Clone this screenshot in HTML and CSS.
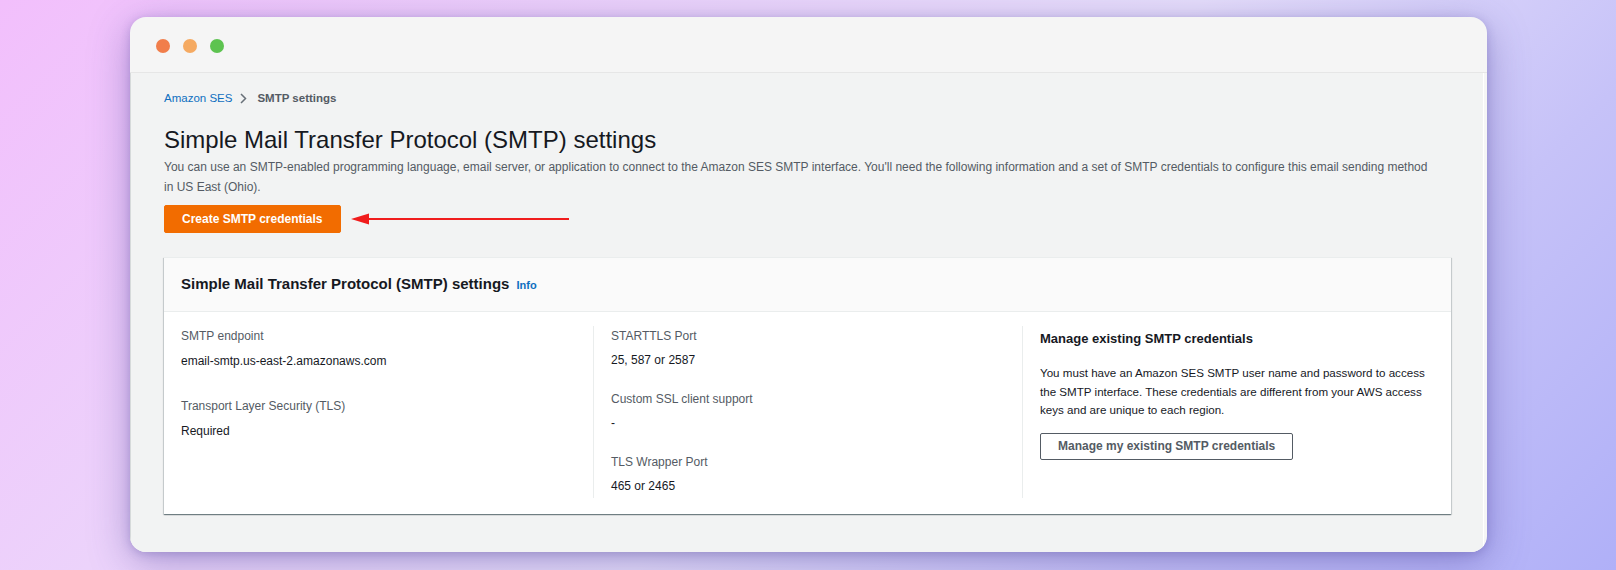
FILE: index.html
```html
<!DOCTYPE html>
<html lang="en">
<head>
<meta charset="utf-8">
<title>SMTP settings</title>
<link rel="stylesheet" href="styles.css">
</head>
<body>
<div class="stage">
  <div class="window">
    <div class="titlebar">
      <span class="dot dot-red"></span>
      <span class="dot dot-yellow"></span>
      <span class="dot dot-green"></span>
    </div>
    <div class="content">
      <nav class="breadcrumb">
        <a class="crumb-link" href="#">Amazon SES</a>
        <svg class="crumb-sep" width="7" height="11" viewBox="0 0 7 11"><path d="M1 1l4.5 4.5L1 10" fill="none" stroke="#687078" stroke-width="1.5"/></svg>
        <span class="crumb-current">SMTP settings</span>
      </nav>
      <h1 class="page-title">Simple Mail Transfer Protocol (SMTP) settings</h1>
      <p class="page-desc">You can use an SMTP-enabled programming language, email server, or application to connect to the Amazon SES SMTP interface. You'll need the following information and a set of SMTP credentials to configure this email sending method in US East (Ohio).</p>
      <div class="action-row">
        <button class="btn-primary">Create SMTP credentials</button>
        <svg class="arrow" width="218" height="14" viewBox="0 0 218 14"><line x1="14" y1="7" x2="218" y2="7" stroke="#f01c1c" stroke-width="2"/><polygon points="0,7 18,1.5 18,12.5" fill="#f01c1c"/></svg>
      </div>
      <section class="panel">
        <header class="panel-header">
          <h2 class="panel-title">Simple Mail Transfer Protocol (SMTP) settings <a class="info" href="#">Info</a></h2>
        </header>
        <div class="panel-body">
          <div class="col col-first">
            <div class="field">
              <div class="label">SMTP endpoint</div>
              <div class="value">email-smtp.us-east-2.amazonaws.com</div>
            </div>
            <div class="field">
              <div class="label">Transport Layer Security (TLS)</div>
              <div class="value">Required</div>
            </div>
          </div>
          <div class="col">
            <div class="field">
              <div class="label">STARTTLS Port</div>
              <div class="value">25, 587 or 2587</div>
            </div>
            <div class="field">
              <div class="label">Custom SSL client support</div>
              <div class="value">-</div>
            </div>
            <div class="field">
              <div class="label">TLS Wrapper Port</div>
              <div class="value">465 or 2465</div>
            </div>
          </div>
          <div class="col">
            <h3 class="col-title">Manage existing SMTP credentials</h3>
            <p class="col-text">You must have an Amazon SES SMTP user name and password to access the SMTP interface. These credentials are different from your AWS access keys and are unique to each region.</p>
            <button class="btn-normal">Manage my existing SMTP credentials</button>
          </div>
        </div>
      </section>
    </div>
  </div>
</div>
</body>
</html>
```

FILE: styles.css
```css
* { box-sizing: border-box; }

html, body {
  margin: 0;
  padding: 0;
}

body {
  width: 1616px;
  height: 570px;
  overflow: hidden;
  font-family: "Liberation Sans", Arial, sans-serif;
  color: #16191f;
  background: linear-gradient(135deg, #f2bffc 0%, #ecd3fb 30%, #e6defb 55%, #c6c2f8 78%, #b0b0f8 100%);
}

.stage {
  padding: 17px 0 0 130px;
}

.window {
  width: 1357px;
  height: 535px;
  border-radius: 16px;
  overflow: hidden;
  background: #f5f5f5;
  display: flex;
  flex-direction: column;
  box-shadow: 0 10px 40px rgba(70, 60, 150, 0.4), 0 2px 10px rgba(70, 60, 150, 0.25);
}

.titlebar {
  height: 56px;
  flex: none;
  display: flex;
  align-items: center;
  gap: 13px;
  padding: 3px 0 0 26px;
  border-bottom: 1px solid #e6e6e6;
}

.dot {
  width: 14px;
  height: 14px;
  border-radius: 50%;
}
.dot-red { background: #f17e4b; }
.dot-yellow { background: #f5aa62; }
.dot-green { background: #5dc350; }

.content {
  flex: 1;
  background: #f2f3f3;
  border-left: 1px solid #d6dada;
  border-right: 1px solid #ffffff;
  margin-right: 3px;
  padding: 15px 32px 0 33px;
}

.breadcrumb {
  display: flex;
  align-items: center;
  height: 20px;
  font-size: 11.5px;
  line-height: 20px;
}

.crumb-link {
  color: #0f6fc0;
  text-decoration: none;
}

.crumb-sep {
  margin: 0 10px 0 8px;
}

.crumb-current {
  color: #545b64;
  font-weight: bold;
}

.page-title {
  margin: 17px 0 0;
  font-size: 24px;
  line-height: 30px;
  font-weight: normal;
  color: #16191f;
}

.page-desc {
  margin: 2px 0 0;
  max-width: 1272px;
  font-size: 12px;
  line-height: 20px;
  color: #545b64;
}

.action-row {
  margin-top: 8px;
  display: flex;
  align-items: center;
  gap: 10px;
}

.btn-primary {
  height: 28px;
  padding: 0 17px;
  border: 1px solid #f26c00;
  border-radius: 2px;
  background: #f26c00;
  color: #ffffff;
  font-family: inherit;
  font-size: 12px;
  font-weight: bold;
}

.panel {
  margin-top: 24px;
  background: #ffffff;
  border-top: 1px solid #eaeded;
  box-shadow: 0 1px 1px 0 rgba(0, 28, 36, 0.4), 1px 1px 1px 0 rgba(0, 28, 36, 0.12), -1px 1px 1px 0 rgba(0, 28, 36, 0.12);
}

.panel-header {
  height: 54px;
  display: flex;
  align-items: center;
  padding: 0 17px;
  background: #fafafa;
  border-bottom: 1px solid #eaeded;
}

.panel-title {
  margin: 0;
  font-size: 15px;
  line-height: 20px;
  font-weight: bold;
  color: #16191f;
}

.info {
  margin-left: 3px;
  font-size: 11px;
  font-weight: bold;
  color: #0f6fc0;
  text-decoration: none;
}

.panel-body {
  display: grid;
  grid-template-columns: repeat(3, 1fr);
  padding: 14px 0 16px;
}

.col {
  padding: 0 17px 2px;
}

.col + .col {
  border-left: 1px solid #eaeded;
}

.label {
  font-size: 12px;
  line-height: 20px;
  color: #545b64;
}

.value {
  margin-top: 4px;
  font-size: 12px;
  line-height: 20px;
  color: #16191f;
}

.field + .field {
  margin-top: 19px;
}

.col-first .value {
  margin-top: 5px;
}

.col-first .field + .field {
  margin-top: 25px;
}

.col-title {
  margin: 3px 0 0;
  font-size: 13px;
  line-height: 20px;
  font-weight: bold;
  color: #16191f;
}

.col-text {
  margin: 15px 0 0;
  font-size: 11.6px;
  line-height: 18.5px;
  color: #16191f;
}

.btn-normal {
  margin-top: 13px;
  height: 27px;
  padding: 0 17px;
  border: 1px solid #545b64;
  border-radius: 2px;
  background: #ffffff;
  color: #545b64;
  font-family: inherit;
  font-size: 12px;
  font-weight: bold;
}
```
